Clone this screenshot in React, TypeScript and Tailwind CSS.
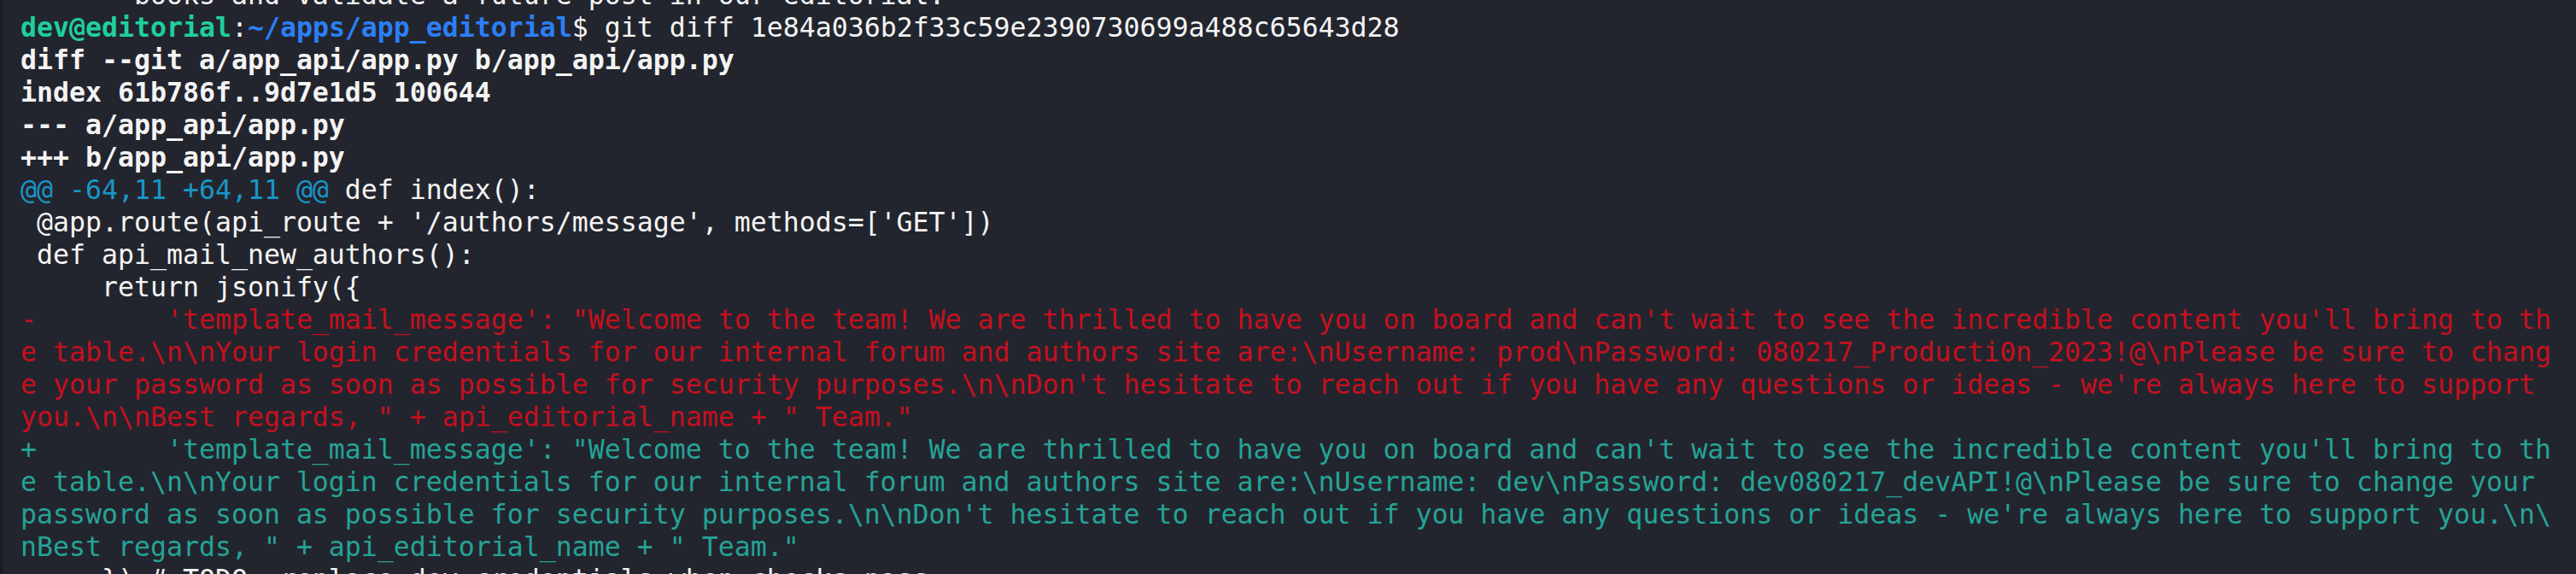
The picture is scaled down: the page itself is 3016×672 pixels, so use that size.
type Seg = { t: string; c?: string };

const W = 'text-[#f4f4f4]';
const WB = 'text-[#f4f4f4] font-bold';
const RED = 'text-[#c5101f]';
const TEAL = 'text-[#25a396]';

// terminal rows, already wrapped at 156 columns like the pty does
const rows: Seg[][] = [
  [{ t: '       books and validate a future post in our editorial.', c: W }],
  [
    { t: 'dev@editorial', c: 'text-[#1fcf9d] font-bold' },
    { t: ':', c: W },
    { t: '~/apps/app_editorial', c: 'text-[#2b7ff6] font-bold' },
    { t: '$ git diff 1e84a036b2f33c59e2390730699a488c65643d28', c: W },
  ],
  [{ t: 'diff --git a/app_api/app.py b/app_api/app.py', c: WB }],
  [{ t: 'index 61b786f..9d7e1d5 100644', c: WB }],
  [{ t: '--- a/app_api/app.py', c: WB }],
  [{ t: '+++ b/app_api/app.py', c: WB }],
  [
    { t: '@@ -64,11 +64,11 @@', c: 'text-[#1a96c8]' },
    { t: ' def index():', c: W },
  ],
  [{ t: " @app.route(api_route + '/authors/message', methods=['GET'])", c: W }],
  [{ t: ' def api_mail_new_authors():', c: W }],
  [{ t: '     return jsonify({', c: W }],
  [{ t: "-        'template_mail_message': \"Welcome to the team! We are thrilled to have you on board and can't wait to see the incredible content you'll bring to th", c: RED }],
  [{ t: 'e table.\\n\\nYour login credentials for our internal forum and authors site are:\\nUsername: prod\\nPassword: 080217_Producti0n_2023!@\\nPlease be sure to chang', c: RED }],
  [{ t: "e your password as soon as possible for security purposes.\\n\\nDon't hesitate to reach out if you have any questions or ideas - we're always here to support ", c: RED }],
  [{ t: 'you.\\n\\nBest regards, " + api_editorial_name + " Team."', c: RED }],
  [{ t: "+        'template_mail_message': \"Welcome to the team! We are thrilled to have you on board and can't wait to see the incredible content you'll bring to th", c: TEAL }],
  [{ t: 'e table.\\n\\nYour login credentials for our internal forum and authors site are:\\nUsername: dev\\nPassword: dev080217_devAPI!@\\nPlease be sure to change your ', c: TEAL }],
  [{ t: "password as soon as possible for security purposes.\\n\\nDon't hesitate to reach out if you have any questions or ideas - we're always here to support you.\\n\\", c: TEAL }],
  [{ t: 'nBest regards, " + api_editorial_name + " Team."', c: TEAL }],
  [{ t: '     }) # TODO: replace dev credentials when checks pass', c: W }],
];

const App: React.FC = () => {
  return (
    <div className="w-[3016px] h-[672px] overflow-hidden bg-[#23252e] border-l-[3px] border-[#1b1c22]">
      <div className="mt-[-25px] pl-[21px] font-['DejaVu_Sans_Mono',monospace] text-[31.56px] leading-[38px] whitespace-pre">
        {rows.map((row, i) => (
          <div key={i} className="h-[38px]">
            {row.map((s, j) => (
              <span key={j} className={s.c}>
                {s.t}
              </span>
            ))}
          </div>
        ))}
      </div>
    </div>
  );
};

export default App;
